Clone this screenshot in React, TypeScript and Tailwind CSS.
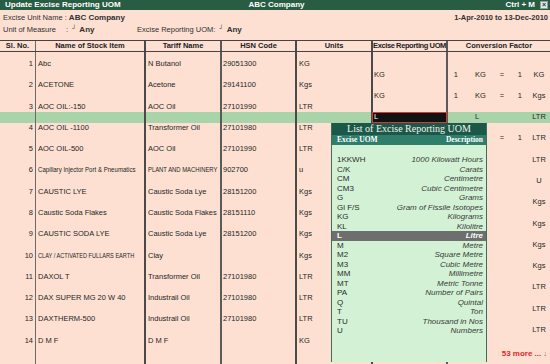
import React from 'react';

type Conv = [string, string, string, string, string];

type Row = {
  n: number;
  name: string;
  tariff: string;
  hsn: string;
  unit: string;
  ex?: string;
  conv?: Conv;
  nameCls?: string;
  tariffCls?: string;
  editing?: boolean;
};

const rows: Row[] = [
  { n: 1, name: 'Abc', tariff: 'N Butanol', hsn: '29051300', unit: 'KG', ex: 'KG', conv: ['1', 'KG', '=', '1', 'KG'] },
  { n: 2, name: 'ACETONE', tariff: 'Acetone', hsn: '29141100', unit: 'Kgs', ex: 'KG', conv: ['1', 'KG', '=', '1', 'Kgs'] },
  { n: 3, name: 'AOC OIL:-150', tariff: 'AOC Oil', hsn: '27101990', unit: 'LTR', editing: true, conv: ['', 'L', '', '', 'LTR'] },
  // the popup hides the left part of this row's conversion
  { n: 4, name: 'AOC OIL -1100', tariff: 'Transformer Oil', hsn: '27101980', unit: 'LTR', conv: ['', '', '=', '1', 'LTR'] },
  { n: 5, name: 'AOC OIL-500', tariff: 'AOC Oil', hsn: '27101990', unit: 'LTR', conv: ['', '', '', '', 'LTR'] },
  {
    n: 6,
    name: 'Capillary Injector Port & Pneumatics',
    nameCls: 'inline-block origin-left text-[7px] scale-x-[0.87]',
    tariff: 'PLANT AND MACHINERY',
    tariffCls: 'inline-block origin-left text-[7px] scale-x-[0.84]',
    hsn: '902700',
    unit: 'u',
    conv: ['', '', '', '', 'U'],
  },
  { n: 7, name: 'CAUSTIC LYE', tariff: 'Caustic Soda Lye', hsn: '28151200', unit: 'Kgs', conv: ['', '', '', '', 'Kgs'] },
  { n: 8, name: 'Caustic Soda Flakes', tariff: 'Caustic Soda Flakes', hsn: '28151110', unit: 'Kgs', conv: ['', '', '', '', 'Kgs'] },
  { n: 9, name: 'CAUSTIC SODA LYE', tariff: 'Caustic Soda Lye', hsn: '28151200', unit: 'Kgs', conv: ['', '', '', '', 'Kgs'] },
  {
    n: 10,
    name: 'CLAY / ACTIVATED FULLARS EARTH',
    nameCls: 'inline-block origin-left text-[7px] scale-x-[0.8]',
    tariff: 'Clay',
    hsn: '',
    unit: 'Kgs',
    conv: ['', '', '', '', 'Kgs'],
  },
  { n: 11, name: 'DAXOL T', tariff: 'Transformer Oil', hsn: '27101980', unit: 'LTR', conv: ['', '', '', '', 'LTR'] },
  { n: 12, name: 'DAX SUPER MG 20 W 40', tariff: 'Industrail Oil', hsn: '27101980', unit: 'LTR', conv: ['', '', '', '', 'LTR'] },
  { n: 13, name: 'DAXTHERM-500', tariff: 'Industrail Oil', hsn: '27101980', unit: 'LTR', conv: ['', '', '', '', 'LTR'] },
  { n: 14, name: 'D M F', tariff: 'D M F', hsn: '', unit: 'KG' },
];

const uoms: [string, string][] = [
  ['1KKWH', '1000 Kilowatt Hours'],
  ['C/K', 'Carats'],
  ['CM', 'Centimetre'],
  ['CM3', 'Cubic Centimetre'],
  ['G', 'Grams'],
  ['Gl F/S', 'Gram of Fissile Isotopes'],
  ['KG', 'Kilograms'],
  ['KL', 'Kilolitre'],
  ['L', 'Litre'],
  ['M', 'Metre'],
  ['M2', 'Square Metre'],
  ['M3', 'Cubic Metre'],
  ['MM', 'Millimetre'],
  ['MT', 'Metric Tonne'],
  ['PA', 'Number of Pairs'],
  ['Q', 'Quintal'],
  ['T', 'Ton'],
  ['TU', 'Thousand in Nos'],
  ['U', 'Numbers'],
];

// column grid shared by header, body rows and the filler at the bottom
const cols = 'grid grid-cols-[36px_110px_76px_75px_76px_75px_1fr]';
const bd = [
  'border-r border-[#6a6a6a]',
  'border-r-2 border-[#4a4a4a]',
  'border-r-2 border-[#5a5a5a]',
  'border-r-2 border-[#4a4a4a]',
  'border-r-2 border-[#4a4a4a]',
  'border-r-2 border-[#5a5a5a]',
  '',
];
const line = 'h-[10.65px] leading-[10.65px] whitespace-nowrap overflow-hidden';

function ItemRow({ r }: { r: Row }) {
  const band = r.editing ? 'bg-[#a9d3a9]' : '';
  const c = r.conv ?? ['', '', '', '', ''];
  return (
    <div className={cols}>
      <div className={bd[0]}>
        <div className={`${line} text-right pr-[2px]`}>{r.n}</div>
        <div className={`${line} ${band}`} />
      </div>
      <div className={bd[1]}>
        <div className={`${line} pl-[2px]`}>
          <span className={r.nameCls}>{r.name}</span>
        </div>
        <div className={`${line} ${band}`} />
      </div>
      <div className={bd[2]}>
        <div className={`${line} pl-[2px]`}>
          <span className={r.tariffCls}>{r.tariff}</span>
        </div>
        <div className={`${line} ${band}`} />
      </div>
      <div className={bd[3]}>
        <div className={`${line} pl-px`}>{r.hsn}</div>
        <div className={`${line} ${band}`} />
      </div>
      <div className={bd[4]}>
        <div className={`${line} pl-[2px]`}>{r.unit}</div>
        <div className={`${line} ${band}`} />
      </div>
      <div className={bd[5]}>
        <div className={line} />
        {r.editing ? (
          <div className="h-[10.65px] -mx-px bg-[#121212] border border-[#d23a3a] text-white leading-[8.65px] pl-px">L</div>
        ) : (
          <div className={`${line} pl-px`}>{r.ex}</div>
        )}
      </div>
      <div>
        <div className={line} />
        <div className={`${line} flex ${band}`}>
          <span className="w-[10px] shrink-0 text-right">{c[0]}</span>
          <span className="ml-[17px] w-[20px] shrink-0">{c[1]}</span>
          <span className="w-[14px] shrink-0 text-center">{c[2]}</span>
          <span className="w-[13px] shrink-0 text-right">{c[3]}</span>
          <span className="pl-[6px] flex-1 text-center">{c[4]}</span>
        </div>
      </div>
    </div>
  );
}

export default function App() {
  return (
    <div className="relative w-[550px] h-[364px] overflow-hidden bg-[#fde0d2] text-[#262626] flex flex-col font-['Liberation_Sans',Arial,sans-serif]">
      {/* title bar */}
      <div className="h-[10px] bg-[#285c43] text-white text-[8px] font-bold leading-[10px] grid grid-cols-[1fr_auto_1fr] pl-[5px] pr-[2px]">
        <div>Update Excise Reporting UOM</div>
        <div>ABC Company</div>
        <div className="flex justify-end items-center">
          <span>Ctrl + M</span>
          <span className="ml-[5px] w-[8px] h-[8px] bg-[#dfe8e4] border border-[#8aa398] text-[#2a3a32] text-[7px] leading-[6px] text-center">×</span>
        </div>
      </div>

      {/* report info */}
      <div className="pt-[2px] pb-[4px] text-[7.5px] text-[#303030]">
        <div className="h-[12px] flex items-center justify-between pl-[3px] pr-[2px]">
          <div>
            Excise Unit Name : <span className="font-bold text-[8px]">ABC Company</span>
          </div>
          <div className="font-bold">1-Apr-2010 to 13-Dec-2010</div>
        </div>
        <div className="h-[12px] flex items-center pl-[3px]">
          <div className="w-[134px] flex items-center">
            <span className="w-[63px]">Unit of Measure</span>
            <span>:</span>
            <span className="ml-[4px] text-[6px] font-bold self-start leading-[8px]">┘</span>
            <span className="ml-[3px] font-bold text-[8px]">Any</span>
          </div>
          <span>Excise Reporting UOM:</span>
          <span className="ml-[4px] text-[6px] font-bold self-start leading-[8px]">┘</span>
          <span className="ml-[3px] font-bold text-[8px]">Any</span>
        </div>
      </div>

      {/* column header */}
      <div className={`${cols} h-[12px] border-y border-[#444] text-[7.5px] font-bold leading-[10px] text-[#222]`}>
        <div className={`${bd[0]} text-center`}>Sl. No.</div>
        <div className={`${bd[1]} text-center`}>Name of Stock Item</div>
        <div className={`${bd[2]} text-center`}>Tariff Name</div>
        <div className={`${bd[3]} text-center`}>HSN Code</div>
        <div className={`${bd[4]} text-center`}>Units</div>
        <div className={`${bd[5]} text-center whitespace-nowrap tracking-[-0.4px]`}>Excise Reporting UOM</div>
        <div className="text-center">Conversion Factor</div>
      </div>

      {/* body */}
      <div className="text-[7.5px] flex-1 flex flex-col">
        <div className={`${cols} h-[7px]`}>
          {bd.map((b, i) => (
            <div key={i} className={b} />
          ))}
        </div>
        {rows.map((r) => (
          <ItemRow key={r.n} r={r} />
        ))}
        <div className={`${cols} flex-1`}>
          {bd.map((b, i) => (
            <div key={i} className={b} />
          ))}
        </div>
      </div>

      {/* list popup */}
      <div className="absolute left-[331px] top-[123px] w-[156px] h-[239px] bg-[#d3f2d5] border-x border-[#3b6e5e] text-[8px] text-[#2a2a2a]">
        <div className="h-[12px] bg-[#1c5848] text-center text-[10px] leading-[12px] text-[#f4f4ec] font-['Liberation_Serif','Times_New_Roman',serif]">
          List of Excise Reporting UOM
        </div>
        <div className="h-[10px] bg-[#2f7d6b] flex justify-between items-center pl-[5px] pr-[3px] text-[7.5px] font-bold text-white font-['Liberation_Serif','Times_New_Roman',serif]">
          <span>Excise UOM</span>
          <span>Description</span>
        </div>
        <div className="h-[10px]" />
        {uoms.map(([code, desc]) => {
          const sel = code === 'L';
          return (
            <div
              key={code}
              className={`h-[9.5px] leading-[9.5px] flex justify-between pl-[5px] pr-[3px] whitespace-nowrap ${sel ? 'bg-[#6e6e6e] text-white font-bold' : ''}`}
            >
              <span>{code}</span>
              <span className={`italic ${sel ? 'text-white' : 'text-[#3a3a3a]'}`}>{desc}</span>
            </div>
          );
        })}
      </div>

      <div className="absolute right-[3px] bottom-[5px] h-[10px] leading-[10px] text-[8px] font-bold text-[#e02828]">
        53 more ... <span className="text-[7px]">↓</span>
      </div>
    </div>
  );
}
